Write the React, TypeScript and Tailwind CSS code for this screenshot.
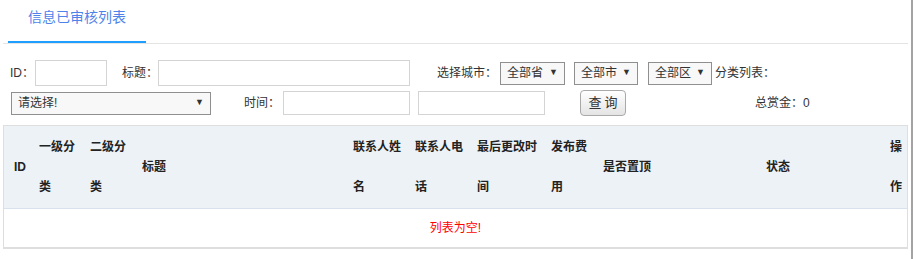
import React from "react";

const FONT = { fontFamily: '"Liberation Sans", "Noto Sans CJK SC", sans-serif' };

function FakeSelect({ label, w, h }: { label: string; w: string; h: string }) {
  return (
    <div
      className={`${w} ${h} flex items-center justify-between border border-[#8f8f8f] bg-[#f8f8f8] pl-[6px] pr-[6px] text-[12px] text-[#333]`}
    >
      <span>{label}</span>
      <span className="text-[9px] text-[#333]">▼</span>
    </div>
  );
}

type Col = { w: string; lines: string[] };

const cols: Col[] = [
  { w: "w-[25px]", lines: ["ID"] },
  { w: "w-[51px]", lines: ["一级分", "类"] },
  { w: "w-[52px]", lines: ["二级分", "类"] },
  { w: "w-[211px]", lines: ["标题"] },
  { w: "w-[62px]", lines: ["联系人姓", "名"] },
  { w: "w-[62px]", lines: ["联系人电", "话"] },
  { w: "w-[74px]", lines: ["最后更改时", "间"] },
  { w: "w-[52px]", lines: ["发布费", "用"] },
  { w: "w-[163px]", lines: ["是否置顶"] },
  { w: "w-[124px]", lines: ["状态"] },
  { w: "flex-1", lines: ["操", "作"] },
];

export default function App() {
  return (
    <div
      className="w-[913px] h-[259px] bg-white border-r-2 border-[#a3a3a3] text-[12px] text-[#333] overflow-hidden"
      style={FONT}
    >
      {/* Tab bar */}
      <div className="ml-[3px] w-[905px] h-[44px] border-b border-[#e4e4e4] flex">
        <div className="ml-[5px] w-[138px] h-[43px] border-b-2 border-[#1e9fff] flex justify-center pt-[7px]">
          <span className="text-[14px] leading-[20px] text-[#4f83ea]">信息已审核列表</span>
        </div>
      </div>

      {/* Row 1 */}
      <div className="mt-[16px] h-[26px] flex items-center">
        <span className="ml-[10px] w-[25px]">ID：</span>
        <div className="w-[72px] h-[26px] border border-[#d4d4d4] bg-white" />
        <span className="ml-[15px] w-[36px]">标题：</span>
        <div className="w-[252px] h-[26px] border border-[#d4d4d4] bg-white" />
        <span className="ml-[27px] w-[63px]">选择城市：</span>
        <FakeSelect label="全部省" w="w-[65px]" h="h-[23px]" />
        <div className="ml-[9px]">
          <FakeSelect label="全部市" w="w-[64px]" h="h-[23px]" />
        </div>
        <div className="ml-[10px]">
          <FakeSelect label="全部区" w="w-[64px]" h="h-[23px]" />
        </div>
        <span className="ml-[3px]">分类列表：</span>
      </div>

      {/* Row 2 */}
      <div className="mt-[4px] h-[26px] flex items-center">
        <div className="ml-[11px]">
          <FakeSelect label="请选择!" w="w-[200px]" h="h-[23px]" />
        </div>
        <span className="ml-[33px] w-[39px]">时间：</span>
        <div className="w-[127px] h-[24px] border border-[#d4d4d4] bg-white" />
        <div className="ml-[8px] w-[127px] h-[24px] border border-[#d4d4d4] bg-white" />
        <button className="ml-[35px] w-[46px] h-[26px] rounded-[4px] border border-[#a9a9a9] bg-gradient-to-b from-[#ffffff] to-[#e4e4e4] text-[13px] tracking-[3px] pl-[3px] text-[#333]">
          查询
        </button>
        <span className="ml-[129px]">总赏金：0</span>
      </div>

      {/* Table */}
      <div className="ml-[3px] mt-[9px] w-[905px] border border-b-2 border-[#dedede]">
        <div className="h-[83px] bg-[#edf2f7] border-b border-[#d8e2ec] flex font-bold text-[#222] leading-[40px]">
          {cols.map((c, i) => (
            <div key={i} className={`${c.w} pl-[10px] flex items-center whitespace-nowrap`}>
              <div>
                {c.lines.map((l, j) => (
                  <div key={j}>{l}</div>
                ))}
              </div>
            </div>
          ))}
        </div>
        <div className="h-[38px] flex items-center justify-center text-[#ff0000]">列表为空!</div>
      </div>
    </div>
  );
}
